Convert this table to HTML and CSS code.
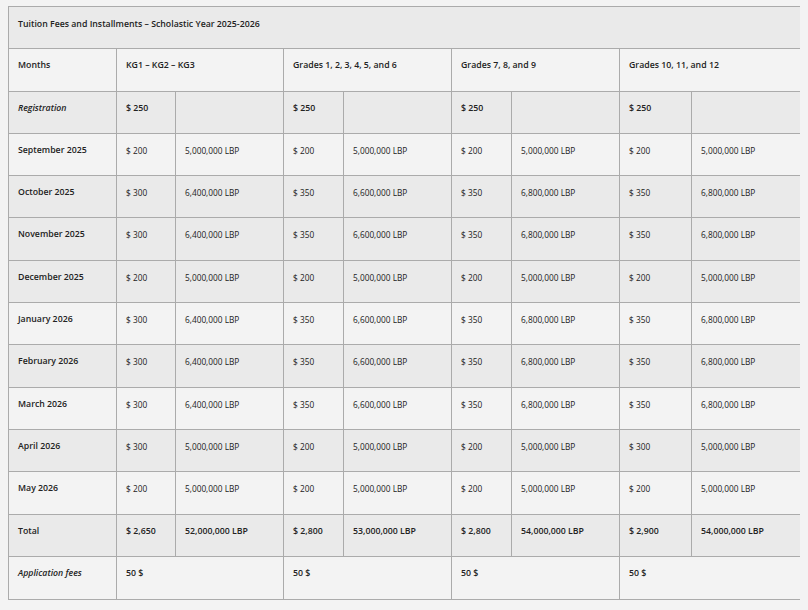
FILE: index.html
```html
<!DOCTYPE html>
<html lang="en">
<head>
<meta charset="utf-8">
<title>Tuition Fees</title>
<link rel="stylesheet" href="styles.css">
</head>
<body>
<table class="fees">
  <colgroup>
    <col class="c-month">
    <col class="c-usd"><col class="c-lbp">
    <col class="c-usd2"><col class="c-lbp">
    <col class="c-usd2"><col class="c-lbp">
    <col class="c-usd3"><col class="c-lbp3">
  </colgroup>
  <tbody>
    <tr class="gray title"><td class="b" colspan="9">Tuition Fees and Installments – Scholastic Year 2025-2026</td></tr>
    <tr class="light"><td class="b">Months</td><td class="b" colspan="2">KG1 – KG2 – KG3</td><td class="b" colspan="2">Grades 1, 2, 3, 4, 5, and 6</td><td class="b" colspan="2">Grades 7, 8, and 9</td><td class="b" colspan="2">Grades 10, 11, and 12</td></tr>
    <tr class="gray"><td class="bi">Registration</td><td class="b">$ 250</td><td></td><td class="b">$ 250</td><td></td><td class="b">$ 250</td><td></td><td class="b">$ 250</td><td></td></tr>
    <tr class="light"><td class="b">September 2025</td><td>$ 200</td><td>5,000,000 LBP</td><td>$ 200</td><td>5,000,000 LBP</td><td>$ 200</td><td>5,000,000 LBP</td><td>$ 200</td><td>5,000,000 LBP</td></tr>
    <tr class="gray"><td class="b">October 2025</td><td>$ 300</td><td>6,400,000 LBP</td><td>$ 350</td><td>6,600,000 LBP</td><td>$ 350</td><td>6,800,000 LBP</td><td>$ 350</td><td>6,800,000 LBP</td></tr>
    <tr class="gray"><td class="b">November 2025</td><td>$ 300</td><td>6,400,000 LBP</td><td>$ 350</td><td>6,600,000 LBP</td><td>$ 350</td><td>6,800,000 LBP</td><td>$ 350</td><td>6,800,000 LBP</td></tr>
    <tr class="gray"><td class="b">December 2025</td><td>$ 200</td><td>5,000,000 LBP</td><td>$ 200</td><td>5,000,000 LBP</td><td>$ 200</td><td>5,000,000 LBP</td><td>$ 200</td><td>5,000,000 LBP</td></tr>
    <tr class="light"><td class="b">January 2026</td><td>$ 300</td><td>6,400,000 LBP</td><td>$ 350</td><td>6,600,000 LBP</td><td>$ 350</td><td>6,800,000 LBP</td><td>$ 350</td><td>6,800,000 LBP</td></tr>
    <tr class="gray"><td class="b">February 2026</td><td>$ 300</td><td>6,400,000 LBP</td><td>$ 350</td><td>6,600,000 LBP</td><td>$ 350</td><td>6,800,000 LBP</td><td>$ 350</td><td>6,800,000 LBP</td></tr>
    <tr class="light"><td class="b">March 2026</td><td>$ 300</td><td>6,400,000 LBP</td><td>$ 350</td><td>6,600,000 LBP</td><td>$ 350</td><td>6,800,000 LBP</td><td>$ 350</td><td>6,800,000 LBP</td></tr>
    <tr class="gray"><td class="b">April 2026</td><td>$ 300</td><td>5,000,000 LBP</td><td>$ 200</td><td>5,000,000 LBP</td><td>$ 200</td><td>5,000,000 LBP</td><td>$ 300</td><td>5,000,000 LBP</td></tr>
    <tr class="light"><td class="b">May 2026</td><td>$ 200</td><td>5,000,000 LBP</td><td>$ 200</td><td>5,000,000 LBP</td><td>$ 200</td><td>5,000,000 LBP</td><td>$ 200</td><td>5,000,000 LBP</td></tr>
    <tr class="gray"><td class="b">Total</td><td class="b">$ 2,650</td><td class="b">52,000,000 LBP</td><td class="b">$ 2,800</td><td class="b">53,000,000 LBP</td><td class="b">$ 2,800</td><td class="b">54,000,000 LBP</td><td class="b">$ 2,900</td><td class="b">54,000,000 LBP</td></tr>
    <tr class="light last"><td class="bi">Application fees</td><td class="b" colspan="2">50 $</td><td class="b" colspan="2">50 $</td><td class="b" colspan="2">50 $</td><td class="b" colspan="2">50 $</td></tr>
  </tbody>
</table>
</body>
</html>
```

FILE: styles.css
```css
html, body {
  background: #f3f3f3;
}
body {
  margin: 6px 8px;
  font-family: "Open Sans", "DejaVu Sans", sans-serif;
  font-size: 8.3px;
  color: #222;
}
.fees {
  border-collapse: collapse;
  table-layout: fixed;
  width: 793px;
}
.c-month { width: 108px; }
.c-usd { width: 59px; }
.c-lbp { width: 108px; }
.c-usd2 { width: 60px; }
.c-usd3 { width: 72px; }
.c-lbp3 { width: 109px; }
.fees tr { height: 42.3px; }
.fees tr.last { height: 43px; }
.fees td {
  border: 1px solid #ababab;
  padding: 9px 9px 0;
  vertical-align: top;
  line-height: 15px;
  white-space: nowrap;
  overflow: hidden;
}
.fees tr.title td { padding-top: 10px; }
.gray { background: #eaeaea; }
.light { background: #f3f3f3; }
.b { font-weight: 600; font-size: 8.75px; }
.bi { font-weight: 600; font-style: italic; font-size: 8.75px; }
```
